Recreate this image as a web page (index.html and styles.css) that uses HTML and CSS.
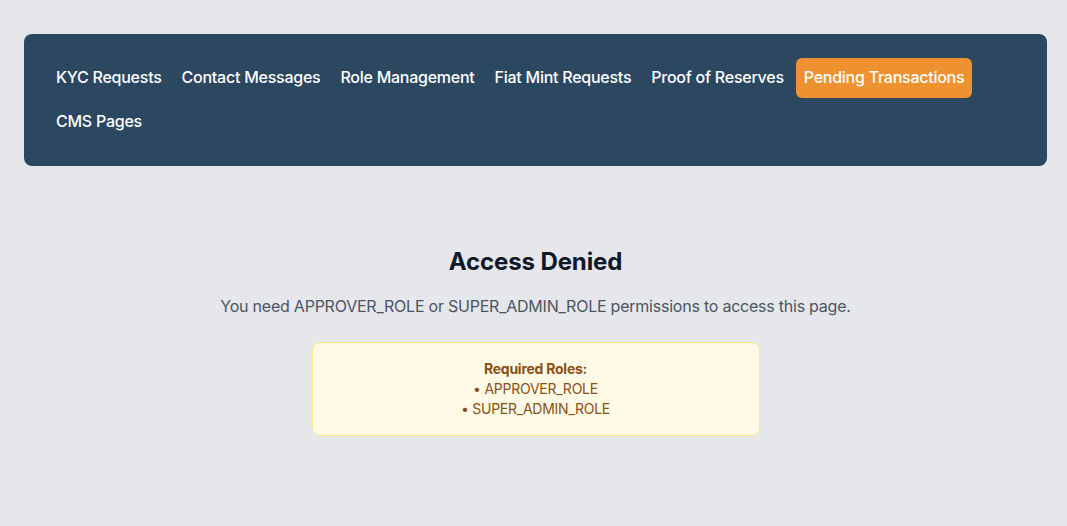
FILE: index.html
```html
<!DOCTYPE html>
<html lang="en">
<head>
<meta charset="utf-8">
<title>Admin - Access Denied</title>
<link rel="stylesheet" href="styles.css">
</head>
<body>
<div class="page">
  <nav class="nav">
    <a class="nav-item">KYC Requests</a>
    <a class="nav-item">Contact Messages</a>
    <a class="nav-item">Role Management</a>
    <a class="nav-item">Fiat Mint Requests</a>
    <a class="nav-item">Proof of Reserves</a>
    <a class="nav-item active">Pending Transactions</a>
    <a class="nav-item">CMS Pages</a>
  </nav>
  <main class="denied">
    <h1 class="title">Access Denied</h1>
    <p class="message">You need APPROVER_ROLE or SUPER_ADMIN_ROLE permissions to access this page.</p>
    <div class="roles">
      <div class="roles-head">Required Roles:</div>
      <div>• APPROVER_ROLE</div>
      <div>• SUPER_ADMIN_ROLE</div>
    </div>
  </main>
</div>
</body>
</html>
```
FILE: styles.css
```css
* { box-sizing: border-box; }
html, body {
  margin: 0;
  padding: 0;
  background: #e5e7eb;
  font-family: Inter, "Open Sans", "Liberation Sans", sans-serif;
}
.page {
  padding: 34px 20px 24px 24px;
}
.nav {
  background: #2c4760;
  border-radius: 8px;
  padding: 24px;
  display: flex;
  flex-wrap: wrap;
  gap: 4px;
}
.nav-item {
  color: #ffffff;
  font-size: 16px;
  font-weight: 500;
  line-height: 24px;
  padding: 7px 8px 9px;
  border-radius: 6px;
  white-space: nowrap;
  letter-spacing: -0.25px;
}
.nav-item.active {
  background: #ee9231;
}
.denied {
  margin-top: 80px;
  display: flex;
  flex-direction: column;
  align-items: center;
  text-align: center;
}
.title {
  margin: 0 0 16px;
  font-size: 24px;
  line-height: 32px;
  font-weight: 700;
  color: #111827;
  letter-spacing: -0.1px;
}
.message {
  margin: 0 0 24px;
  font-size: 16px;
  line-height: 24px;
  color: #4b5563;
  letter-spacing: -0.23px;
}
.roles {
  width: 448px;
  background: #fefae6;
  border: 1px solid #fde88a;
  border-radius: 8px;
  padding: 16px;
  font-size: 14px;
  line-height: 20px;
  color: #8a4f14;
  letter-spacing: -0.25px;
}
.roles-head {
  font-weight: 700;
}
```
